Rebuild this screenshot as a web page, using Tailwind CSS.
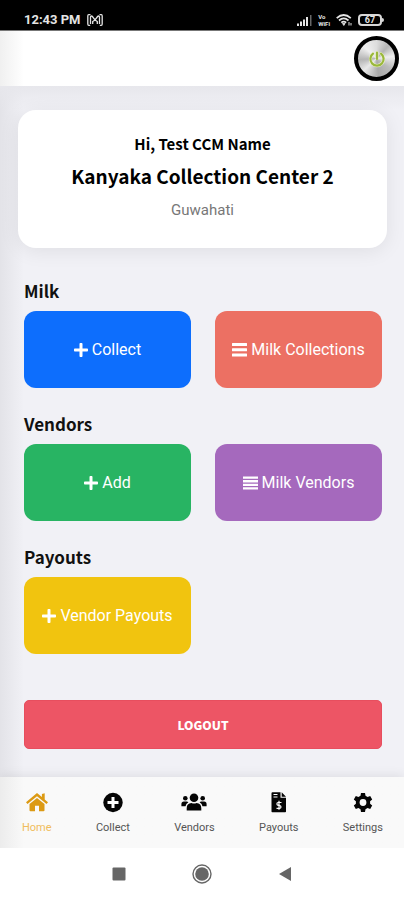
<!DOCTYPE html>
<html lang="en">
<head>
<meta charset="utf-8">
<meta name="viewport" content="width=device-width, initial-scale=1">
<title>Collection Center</title>
<script src="https://cdn.jsdelivr.net/npm/@tailwindcss/browser@4"></script>
</head>
<body class="flex min-h-screen flex-col bg-white font-['Roboto',sans-serif] text-black">
<svg class="hidden" aria-hidden="true">
  <symbol id="plus" viewBox="0 0 448 448"><path d="M416 176H272V32c0-17.700-14.300-32-32-32h-32c-17.700 0-32 14.300-32 32v144H32c-17.700 0-32 14.300-32 32v32c0 17.700 14.300 32 32 32h144v144c0 17.700 14.300 32 32 32h32c17.700 0 32-14.300 32-32V272h144c17.700 0 32-14.300 32-32v-32c0-17.700-14.300-32-32-32z"/></symbol>
  <symbol id="list" viewBox="0 0 15 14"><path d="M0 .5h15v2.300H0zM0 4.100h15v2.300H0zM0 7.700h15V10H0zM0 11.300h15v2.300H0z"/></symbol>
  <symbol id="bars" viewBox="0 0 15 14"><path d="M.5 0h14q.5 0 .5.500v2q0 .5-.5.500H.5Q0 3 0 2.500v-2Q0 0 .5 0zM.5 5.300h14q.5 0 .5.500v2q0 .5-.5.500H.5q-.5 0-.5-.5v-2q0-.5.500-.5zM.5 10.600h14q.5 0 .5.500v2q0 .5-.5.500H.5q-.5 0-.5-.5v-2q0-.5.500-.5z"/></symbol>
</svg>

<div class="flex h-[31px] items-end justify-between border-b border-[#777] bg-black pr-[20px] pb-[2px] pl-6 text-[#e4e4e4]">
  <div class="flex items-center gap-[6px]">
    <span class="text-[13px] leading-4 font-bold">12:43 PM</span>
    <svg class="h-3 w-4" viewBox="0 0 16 12" fill="none" stroke="currentColor" stroke-width="1.300"><path d="M3.500.7H1.700Q.8.700.8 2v8q0 1.300 1 1.300h1.400M12.500.7h1.800q.9 0 .9 1.300v8q0 1.300-1 1.300h-1.400"/><path d="M3.500 10V3.200Q3.500 2 4.500 2t1.200 1L8 6l2.300-3q.2-1 1.200-1t1 1.200V10M5.700 10V7.500L8 6l2.300 1.500V10"/></svg>
  </div>
  <div class="flex items-center gap-[6px] pb-px">
    <svg class="h-3 w-[15px]" viewBox="0 0 15 12" fill="currentColor"><path d="M0 9.500h2V12H0zM3 7.500h2V12H3zM6 5.500h2V12H6zM9 3h2v9H9z"/><path d="M13 1h1.500v11H13z" opacity=".45"/></svg>
    <span class="flex flex-col text-[6px] leading-[7px] font-bold"><span>Vo</span><span>WiFi</span></span>
    <svg class="h-3 w-4" viewBox="0 0 16 12" fill="none" stroke="currentColor" stroke-width="1.700"><path d="M.7 4.200Q7.700-2.200 14.800 4.200M3 6.500q4.700-4.300 9.500 0M5.300 8.700q2.400-2 4.900 0"/><path d="M6.500 9.500h2.600L7.800 11.500z" fill="currentColor" stroke-width=".8"/><path d="M13 8v3.500M15 9v2.500" stroke-width="1"/></svg>
    <div class="flex items-center"><span class="flex h-3 w-6 items-center justify-center rounded-[4px] border-2 border-[#d8d8d8] text-[9px] leading-[8px] font-bold">67</span><span class="h-1 w-[2px] rounded-r-sm bg-[#d8d8d8]"></span></div>
  </div>
</div>

<header class="flex h-[55px] items-center justify-end bg-white bg-linear-to-r from-[#f0f0f0] to-white to-[24px] pr-[5px]">
  <button aria-label="Power" class="flex size-[45px] items-center justify-center rounded-full border-[4px] border-black bg-[conic-gradient(from_0deg,#ddd,#b4b4b4_12%,#eee_23%,#bbb_35%,#a9a9a9_48%,#e9e9e9_63%,#b5b5b5_74%,#efefef_87%,#ddd)]">
    <svg class="size-[18px]" viewBox="0 0 18 18" fill="none" stroke-linecap="round"><path d="M5 3.700a6.600 6.600 0 1 0 8 0M9 2.500v6" stroke="#eef2cf" stroke-width="3.200"/><path d="M5 3.700a6.600 6.600 0 1 0 8 0M9 2.500v6.500" stroke="#9ab83c" stroke-width="2.200"/></svg>
  </button>
</header>

<div class="flex flex-1 flex-col bg-[#f1f1f6] bg-linear-to-r from-[#e3e3e8] to-[#f1f1f6] to-[24px]">
  <main class="flex-1 bg-linear-to-b from-[#e7e7ec] to-transparent to-[24px] pb-7">
    <section class="mt-6 mr-[17px] ml-[18px] flex h-[138px] flex-col items-center rounded-[18px] bg-white pt-[22px] text-center shadow-[0_3px_20px_rgba(0,0,0,0.08)]">
      <p class="font-['Noto_Sans_CJK_JP',sans-serif] text-[15px] leading-6 font-bold">Hi, Test CCM Name</p>
      <h1 class="mt-1 font-['Noto_Sans_CJK_JP',sans-serif] text-[19px] leading-8 font-bold">Kanyaka Collection Center 2</h1>
      <p class="mt-2 text-[15px] leading-5 text-[#777]">Guwahati</p>
    </section>

    <div class="mt-[29px] flex flex-col gap-[22px] pr-[22px] pl-6">
      <section>
        <h2 class="mb-[6px] font-['Noto_Sans_CJK_JP',sans-serif] text-[17px] leading-7 font-bold text-[#111]">Milk</h2>
        <div class="grid grid-cols-2 gap-6">
          <button class="flex h-[77px] items-center justify-center gap-1 rounded-xl bg-[#0d6efd] text-[16px] text-white"><svg class="size-[14px]" fill="currentColor"><use href="#plus"/></svg>Collect</button>
          <button class="flex h-[77px] items-center justify-center gap-1 rounded-xl bg-[#ec7063] text-[16px] text-white"><svg class="h-[14px] w-[15px]" fill="currentColor"><use href="#bars"/></svg>Milk Collections</button>
        </div>
      </section>
      <section>
        <h2 class="mb-[6px] font-['Noto_Sans_CJK_JP',sans-serif] text-[17px] leading-7 font-bold text-[#111]">Vendors</h2>
        <div class="grid grid-cols-2 gap-6">
          <button class="flex h-[77px] items-center justify-center gap-1 rounded-xl bg-[#28b463] text-[16px] text-white"><svg class="size-[14px]" fill="currentColor"><use href="#plus"/></svg>Add</button>
          <button class="flex h-[77px] items-center justify-center gap-1 rounded-xl bg-[#a569bd] text-[16px] text-white"><svg class="h-[14px] w-[15px]" fill="currentColor"><use href="#list"/></svg>Milk Vendors</button>
        </div>
      </section>
      <section>
        <h2 class="mb-[6px] font-['Noto_Sans_CJK_JP',sans-serif] text-[17px] leading-7 font-bold text-[#111]">Payouts</h2>
        <div class="grid grid-cols-2 gap-6">
          <button class="flex h-[77px] items-center justify-center gap-1 rounded-xl bg-[#f1c40f] text-[16px] text-white"><svg class="size-[14px]" fill="currentColor"><use href="#plus"/></svg>Vendor Payouts</button>
        </div>
      </section>
      <button class="mt-6 h-[49px] w-full rounded-[5px] border border-[#e74e5e] bg-[#ed5565] font-['Noto_Sans_CJK_JP',sans-serif] text-[12px] font-black text-white">LOGOUT</button>
    </div>
  </main>

  <nav class="flex h-[71px] justify-between bg-[#f9f9f9] bg-linear-to-r from-[#ececec] to-[#f9f9f9] to-[24px] pt-[14px] pr-[21px] pl-[22px] text-[11px] leading-3 text-[#555] shadow-[0_-2px_10px_rgba(0,0,0,0.08)]">
    <a href="#home" class="flex flex-col items-center gap-[9px] text-[#f0bd5c]">
      <svg class="h-[22px] w-[22px]" viewBox="0 0 22 22" fill="#dc9a14"><path d="M11 2 0 11.300l1.500 1.800L11 5.200l9.500 7.900 1.500-1.800-3.300-2.800V2.200l-2.800.9v3z"/><path d="M11 6.900 3.500 13v6.200q0 1 1 1H9v-5.400h4v5.400h4.500q1 0 1-1V13z"/></svg>Home</a>
    <a href="#collect" class="flex flex-col items-center gap-[9px]">
      <svg class="h-[22px] w-[22px]" viewBox="0 0 22 22"><circle cx="11" cy="11.500" r="9.700" fill="#050505"/><path d="M11 6v11M5.500 11.500h11" stroke="#fff" stroke-width="3"/></svg>Collect</a>
    <a href="#vendors" class="flex flex-col items-center gap-[9px]">
      <svg class="h-[22px] w-[26px]" viewBox="0 0 26 22" fill="#050505"><circle cx="13" cy="6.700" r="4.300"/><circle cx="4.300" cy="7.200" r="2.300"/><circle cx="21.700" cy="7.200" r="2.300"/><path d="M5.700 19.500v-2.300q0-5 4.800-5.200 2.500 1.100 5 0 4.800.2 4.800 5.200v2.300zM.4 15.200v-2q0-2.700 2.500-2.700h2.800q1 0 1.700.7-2.500 1.500-2.900 4zM25.600 15.200v-2q0-2.700-2.500-2.700h-2.800q-1 0-1.700.7 2.500 1.500 2.900 4z"/></svg>Vendors</a>
    <a href="#payouts" class="flex flex-col items-center gap-[9px]">
      <svg class="h-[22px] w-[16px]" viewBox="0 0 16 22"><path d="M1.500 1.300h8v5.500H15v13.700q0 .8-.8.800H1.300q-.8 0-.8-.8V2.300q0-1 1-1zM10.700 1.300 15 5.700h-4.300z" fill="#050505"/><path d="M2.500 3.500h4M2.500 6h4M10.500 11.500H7.200q-1.300 0-1.300 1.400 0 1.100 1.300 1.400l1.600.4q1.200.3 1.200 1.400t-1.300 1.300H5.500M8 9.800v9" fill="none" stroke="#fff" stroke-width="1.200"/></svg>Payouts</a>
    <a href="#settings" class="flex flex-col items-center gap-[9px]">
      <svg class="h-[22px] w-[22px]" viewBox="0 0 22 22"><path d="M9 2h4l.5 2.700 2.100 1.200 2.600-.9 2 3.500-2.100 1.800v2.400l2.100 1.800-2 3.500-2.600-.9-2.100 1.200L13 21H9l-.5-2.700-2.100-1.200-2.600.9-2-3.500 2.100-1.800v-2.400L1.800 8.500l2-3.500 2.600.9 2.100-1.200z" fill="#050505"/><circle cx="11" cy="11.500" r="3.400" fill="#f9f9f9"/></svg>Settings</a>
  </nav>
</div>

<div class="flex h-[52px] items-center justify-center gap-[66px] bg-white text-[#666]">
  <button aria-label="Recent apps"><svg class="size-[14px]" viewBox="0 0 14 14"><rect x=".5" y=".5" width="13" height="13" rx="1" fill="currentColor"/></svg></button>
  <button aria-label="Home screen"><svg class="size-5" viewBox="0 0 20 20"><circle cx="10" cy="10" r="9" fill="none" stroke="currentColor" stroke-width="1.400"/><circle cx="10" cy="10" r="6.800" fill="currentColor"/></svg></button>
  <button aria-label="Back"><svg class="size-[14px]" viewBox="0 0 14 14"><path d="M13 0v14L1 7z" fill="currentColor"/></svg></button>
</div>
</body>
</html>
